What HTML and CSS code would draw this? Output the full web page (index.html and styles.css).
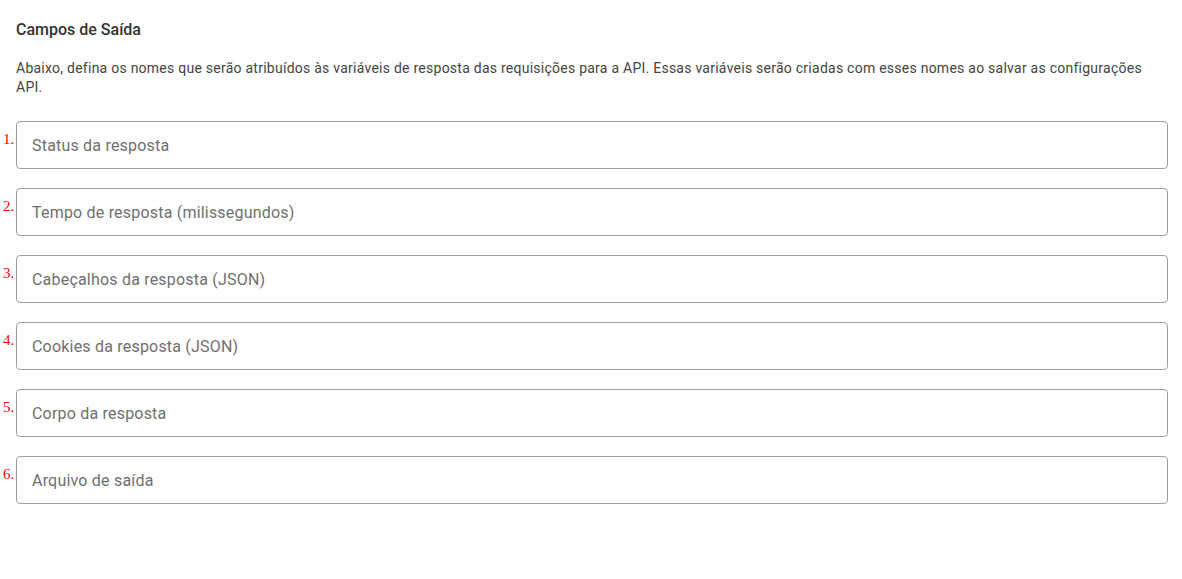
FILE: index.html
```html
<!DOCTYPE html>
<html lang="pt-BR">
<head>
    <meta charset="UTF-8">
    <meta name="viewport" content="width=device-width, initial-scale=1.0">
    <title>Campos de Saída</title>
    <link rel="stylesheet" href="styles.css">
</head>
<body>

<div class="section">
    <h3 class="section-title">Campos de Saída</h3>
    <p class="section-text">Abaixo, defina os nomes que serão atribuídos às variáveis de resposta das requisições para a API. Essas variáveis serão criadas com esses nomes ao salvar as configurações API.</p>

    <div class="fields">
        <div class="field">
            <span class="num">1.</span>
            <input type="text" placeholder="Status da resposta">
        </div>
        <div class="field">
            <span class="num">2.</span>
            <input type="text" placeholder="Tempo de resposta (milissegundos)">
        </div>
        <div class="field">
            <span class="num">3.</span>
            <input type="text" placeholder="Cabeçalhos da resposta (JSON)">
        </div>
        <div class="field">
            <span class="num">4.</span>
            <input type="text" placeholder="Cookies da resposta (JSON)">
        </div>
        <div class="field">
            <span class="num">5.</span>
            <input type="text" placeholder="Corpo da resposta">
        </div>
        <div class="field">
            <span class="num">6.</span>
            <input type="text" placeholder="Arquivo de saída">
        </div>
    </div>
</div>

</body>
</html>
```

FILE: styles.css
```css
* {
    margin: 0;
    padding: 0;
    box-sizing: border-box;
}

body {
    font-family: Roboto, "Liberation Sans", sans-serif;
    background-color: #fff;
    color: #333;
}

.section {
    width: 1183px;
    padding: 21px 15px 16px 16px;
}

.section-title {
    font-size: 16px;
    font-weight: 500;
    line-height: 18px;
    color: #333;
}

.section-text {
    margin-top: 20px;
    font-size: 14px;
    line-height: 19px;
    letter-spacing: 0.25px;
    color: #444;
}

.fields {
    margin-top: 24px;
    display: flex;
    flex-direction: column;
    gap: 19px;
}

.field {
    display: flex;
    align-items: flex-start;
    margin-left: -13px;
}

.num {
    width: 13px;
    flex-shrink: 0;
    padding-top: 10px;
    font-family: "Liberation Serif", serif;
    font-size: 15px;
    line-height: 17px;
    color: #f00;
}

.field input {
    flex: 1;
    height: 48px;
    padding: 0 15px;
    border: 1px solid #9e9e9e;
    border-radius: 4px;
    font-family: Roboto, "Liberation Sans", sans-serif;
    font-size: 16px;
    letter-spacing: 0.2px;
    color: #333;
    outline: none;
}

.field input::placeholder {
    color: #6f6f6f;
}
```
